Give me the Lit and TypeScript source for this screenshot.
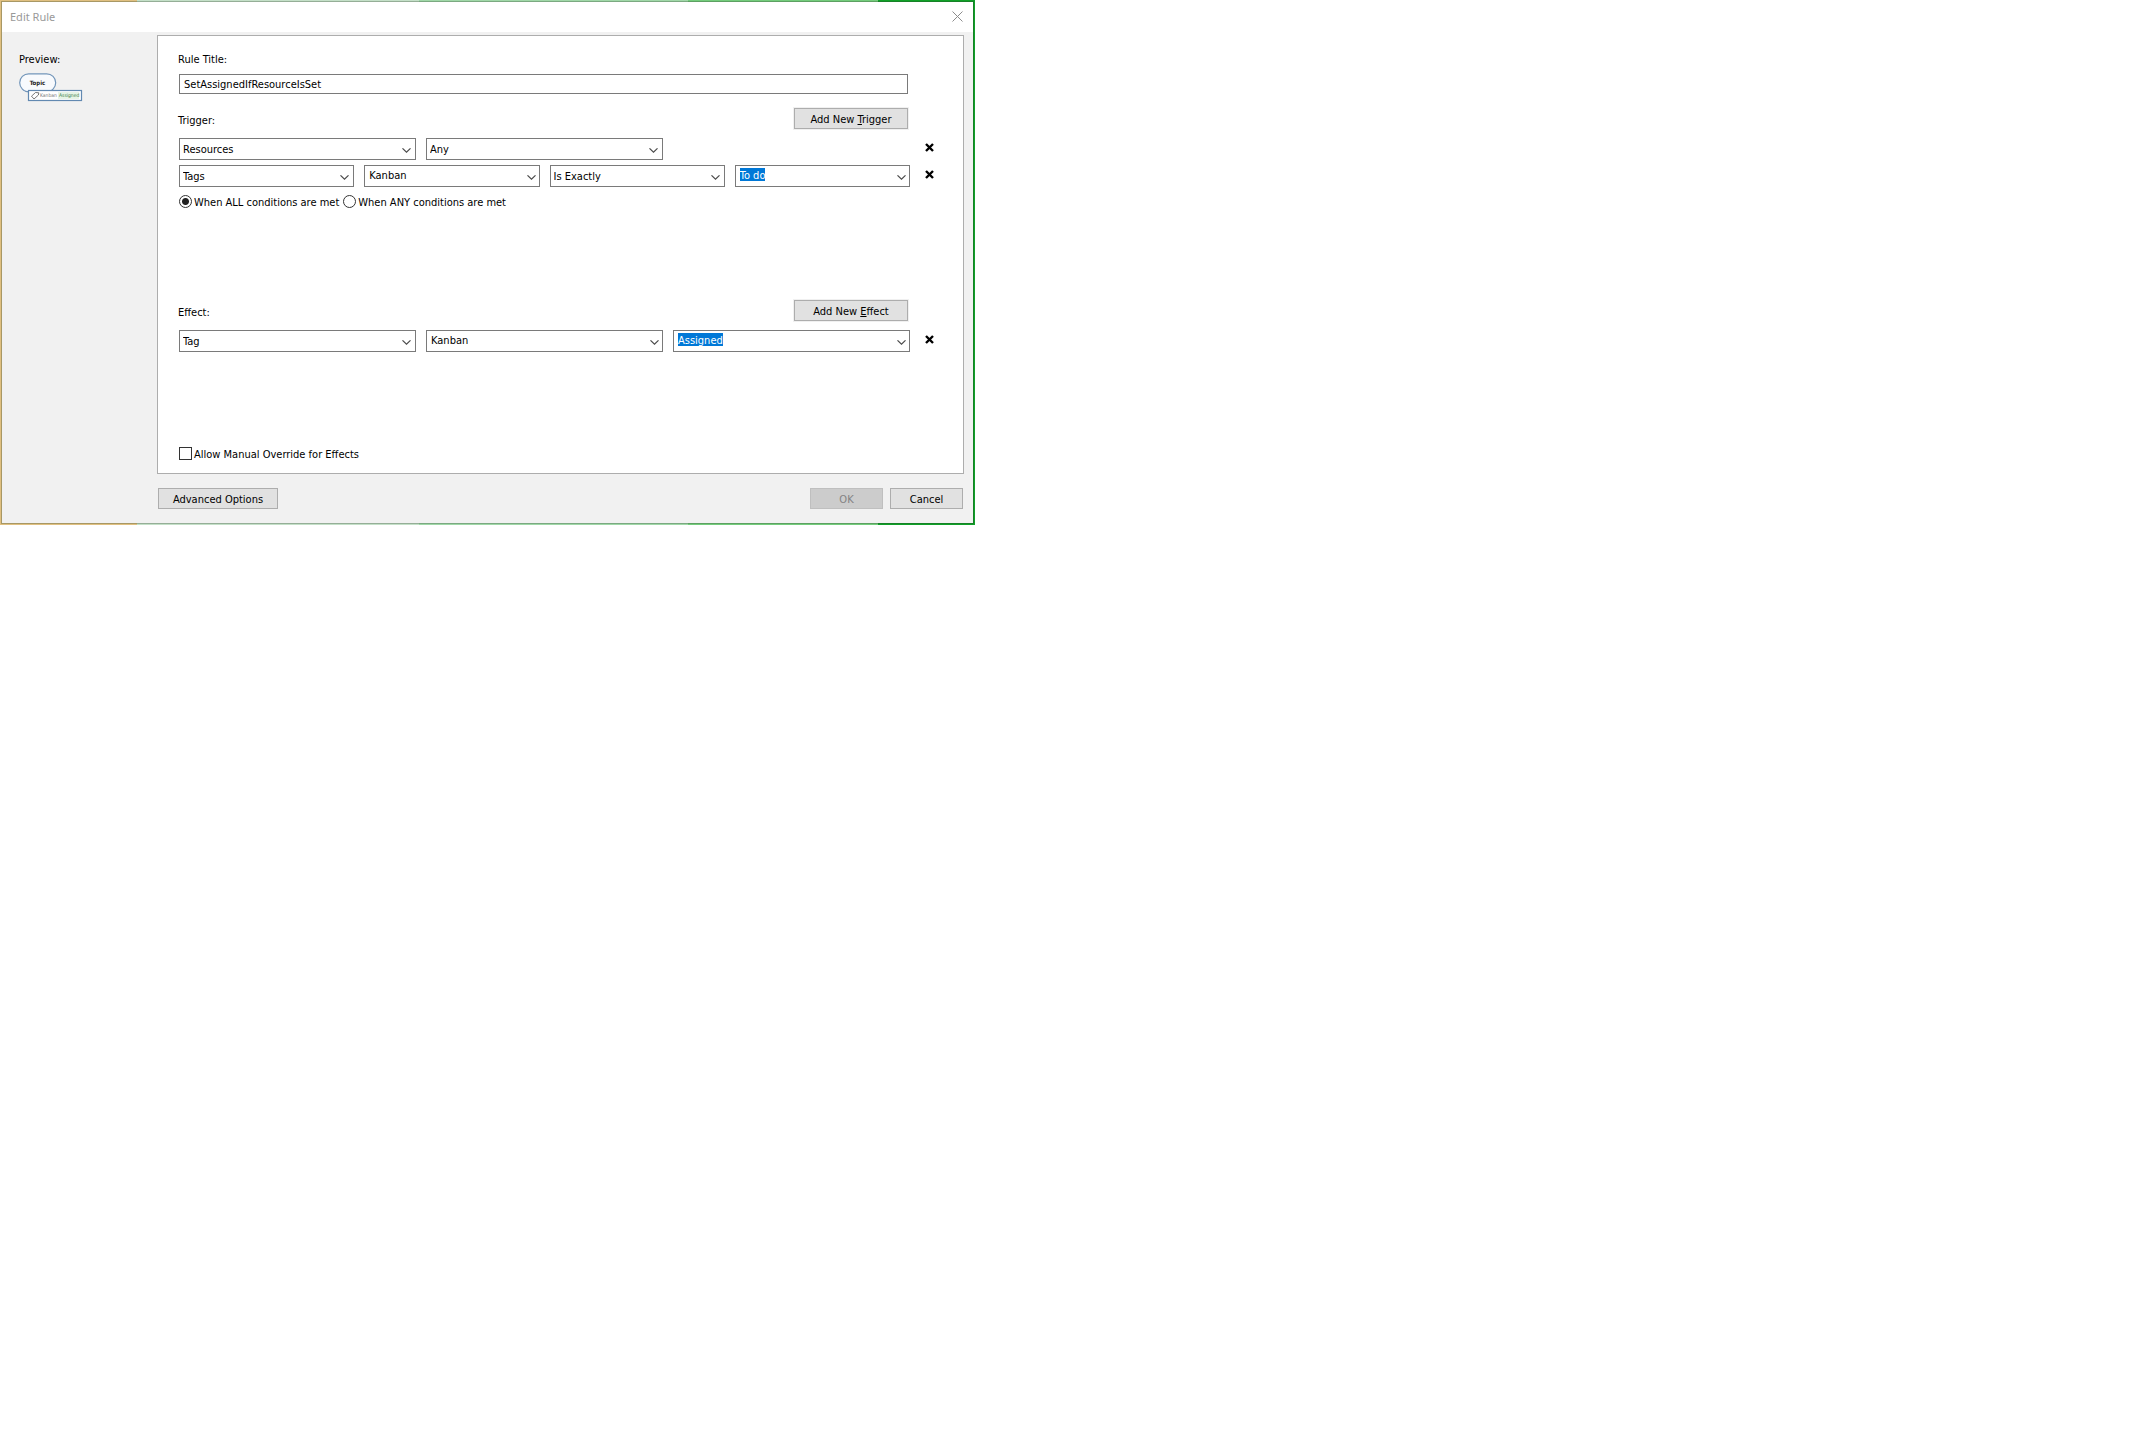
import { LitElement, html, svg, css } from "lit";
import { customElement, property, state } from "lit/decorators.js";
import { classMap } from "lit/directives/class-map.js";

const controlText = css`
  :host,
  button,
  input,
  select {
    font-family: "DejaVu Sans Condensed", "DejaVu Sans", sans-serif;
    font-size: 11px;
    line-height: 14px;
    color: #000;
  }
`;

const chevron = html`<svg class="chevron" width="9" height="5" viewBox="0 0 9 5" aria-hidden="true">
  ${svg`<path d="M0.5 0.3 L4.5 4.2 L8.5 0.3" fill="none" stroke="#4a4a4a" stroke-width="1.1" />`}
</svg>`;

/** Drop-down list; with `editable` it becomes a text box with a drop button. */
@customElement("rule-combo")
class RuleCombo extends LitElement {
  @property() value = "";
  @property() label = "";
  @property({ type: Boolean }) editable = false;
  @property({ type: Boolean }) highlighted = false;

  static styles = [
    controlText,
    css`
      :host {
        display: block;
        flex: 1 1 0;
        min-width: 0;
      }
      .box {
        box-sizing: border-box;
        display: grid;
        grid-template-columns: 1fr 17px;
        height: 22px;
        border: 1px solid #7a7a7a;
        background: #fff;
      }
      .list {
        grid-area: 1 / 1 / 2 / 3;
        appearance: none;
        width: 100%;
        margin: 0;
        padding: 1px 17px 0 3px;
        border: 0;
        border-radius: 0;
        background: transparent;
        outline: none;
      }
      .chevron {
        grid-area: 1 / 2 / 2 / 3;
        place-self: center;
        margin-top: 2px;
        pointer-events: none;
      }
      .edit {
        grid-area: 1 / 1 / 2 / 2;
        box-sizing: border-box;
        justify-self: start;
        field-sizing: content;
        max-width: 100%;
        height: 13px;
        margin: 2px 0 0 4px;
        padding: 1px 0 0;
        border: 0;
        background: transparent;
        line-height: 13px;
        outline: none;
      }
      .edit.on {
        background: #0078d7;
        color: #fff;
      }
      .drop {
        grid-area: 1 / 2 / 2 / 3;
        display: grid;
        padding: 0 1px 0 0;
        border: 0;
        background: transparent;
      }
    `,
  ];

  render() {
    return html`<div class="box">
      ${this.editable
        ? html`<input
              class=${classMap({ edit: true, on: this.highlighted })}
              type="text"
              aria-label=${this.label}
              .value=${this.value}
            />
            <button class="drop" type="button" aria-label="Open list">${chevron}</button>`
        : html`<select class="list" aria-label=${this.label}>
              <option selected>${this.value}</option>
            </select>
            ${chevron}`}
    </div>`;
  }
}

interface Field {
  label: string;
  value: string;
  editable?: boolean;
  highlighted?: boolean;
}

@customElement("app-root")
class AppRoot extends LitElement {
  @state() private triggers: Field[][] = [
    [
      { label: "Trigger type", value: "Resources" },
      { label: "Resource", value: "Any" },
    ],
    [
      { label: "Trigger type", value: "Tags" },
      { label: "Tag group", value: "Kanban", editable: true },
      { label: "Comparison", value: "Is Exactly" },
      { label: "Tag", value: "To do", editable: true, highlighted: true },
    ],
  ];

  @state() private effects: Field[][] = [
    [
      { label: "Effect type", value: "Tag" },
      { label: "Tag group", value: "Kanban", editable: true },
      { label: "Tag", value: "Assigned", editable: true, highlighted: true },
    ],
  ];

  static styles = [
    controlText,
    css`
      :host {
        display: block;
      }
      .dialog {
        box-sizing: border-box;
        max-width: 975px;
        padding: 1px;
        background: linear-gradient(
          90deg,
          #e0c080 14%,
          #c4e0c8 14% 43%,
          #a0d8a8 43% 70.6%,
          #74cc7c 70.6% 90%,
          #10a028 90%
        );
      }
      .window {
        border: 1px solid rgba(40, 60, 40, 0.3);
        background: #f1f1f1;
        background-clip: padding-box;
      }
      .titlebar {
        display: flex;
        align-items: center;
        justify-content: space-between;
        height: 30px;
        padding: 0 9px 0 8px;
        background: #fff;
      }
      .title {
        margin: 0;
        font: 400 11px/16px "Noto Sans", sans-serif;
        color: #999;
      }
      .close,
      .remove {
        display: grid;
        place-items: center;
        padding: 0;
        border: 0;
        background: transparent;
      }
      .close {
        width: 13px;
        height: 13px;
        margin-bottom: 2px;
      }
      .body {
        display: flex;
      }
      .side {
        flex: 0 0 138px;
        padding: 21px 0 0 17px;
      }
      .label {
        display: block;
        margin: 0 0 0 -1px;
        font-size: 11px;
        font-weight: 400;
        line-height: 14px;
      }
      .side .label {
        margin: 0;
      }
      .preview {
        display: block;
        margin-top: 6px;
      }
      .panel {
        flex: 1;
        min-width: 0;
        margin: 3px 9px 0 0;
        padding: 17px 55px 12px 21px;
        border: 1px solid #adadad;
        background: #fff;
      }
      .name {
        box-sizing: border-box;
        display: block;
        width: 100%;
        height: 20px;
        margin: 7px 0 14px;
        padding: 0 4px;
        border: 1px solid #7a7a7a;
        border-radius: 0;
        outline: none;
      }
      .section {
        display: flex;
        flex-direction: column;
        gap: 5px;
      }
      .triggers {
        min-height: 192px;
      }
      .effects {
        min-height: 147px;
      }
      .head {
        display: flex;
        align-items: flex-start;
        justify-content: space-between;
        margin-bottom: 4px;
      }
      .head .label {
        padding-top: 6px;
      }
      .btn {
        box-sizing: border-box;
        height: 21px;
        padding: 2px 0 0;
        border: 1px solid #adadad;
        border-radius: 0;
        background: #e1e1e1;
      }
      .add {
        width: 114px;
        box-shadow: 0 0 0 1px #f0f0f0;
      }
      .row {
        display: flex;
        gap: 10px;
        margin-right: -31px;
      }
      .fields {
        flex: 1;
        display: flex;
        gap: 10px;
        min-width: 0;
      }
      .blank {
        flex: 1 1 0;
      }
      .remove {
        width: 19px;
        height: 19px;
      }
      .choices {
        display: flex;
        gap: 4px;
        margin-top: 3px;
      }
      .choice {
        display: flex;
        gap: 2px;
        height: 14px;
        line-height: 16px;
      }
      .mark {
        box-sizing: border-box;
        appearance: none;
        width: 13px;
        height: 13px;
        margin: 0;
        border: 1px solid #333;
        background: #fff;
      }
      .round {
        border-radius: 50%;
      }
      .round:checked {
        background: radial-gradient(circle, #222 3px, #fff 4px);
      }
      .footer {
        display: flex;
        gap: 7px;
        padding: 14px 10px 14px 156px;
      }
      .advanced {
        width: 120px;
        margin-right: auto;
      }
      .small {
        width: 73px;
      }
      .btn:disabled {
        border-color: #bfbfbf;
        background: #ccc;
        color: #838383;
      }
    `,
  ];

  private preview() {
    return html`<svg class="preview" width="64" height="29" viewBox="0 0 64 29" role="img" aria-label="Topic with tag">
      ${svg`
        <rect x="0.7" y="0.8" width="36" height="18" rx="9" fill="#f8fafd" stroke="#7396ba" stroke-width="1.2" />
        <text x="18.5" y="12" text-anchor="middle" font-size="6" font-weight="700" fill="#222">Topic</text>
        <rect x="9.5" y="17.5" width="53" height="10" fill="#fff" stroke="#6289b1" stroke-width="1.2" />
        <path d="M12.5 23.2 L16.5 19.5 L19.8 19.8 L19.4 22 L15 26 Z" fill="#fff" stroke="#555" stroke-width="0.8" stroke-linejoin="round" />
        <rect x="39" y="19" width="21" height="7" fill="#e6f4e6" />
        <text x="21" y="24" font-size="5" fill="#777">Kanban</text>
        <text x="40" y="24" font-size="5" fill="#3c7c48">Assigned</text>`}
    </svg>`;
  }

  private row(fields: Field[]) {
    return html`<div class="row">
      <div class="fields">
        ${fields.map(
          (f) => html`<rule-combo
            .label=${f.label}
            .value=${f.value}
            .editable=${!!f.editable}
            .highlighted=${!!f.highlighted}
          ></rule-combo>`
        )}
        ${fields.length < 3 ? html`<div class="blank"></div>` : null}
      </div>
      <button class="remove" type="button" aria-label="Remove">
        <svg width="9" height="9" viewBox="0 0 9 9" aria-hidden="true">
          ${svg`<path d="M1 1 L8 8 M8 1 L1 8" stroke="#000" stroke-width="2.4" />`}
        </svg>
      </button>
    </div>`;
  }

  render() {
    return html`<div class="dialog">
      <div class="window" role="dialog" aria-labelledby="title">
        <header class="titlebar">
          <h1 class="title" id="title">Edit Rule</h1>
          <button class="close" type="button" aria-label="Close">
            <svg width="11" height="11" viewBox="0 0 11 11" aria-hidden="true">
              ${svg`<path d="M0.5 0.5 L10.5 10.5 M10.5 0.5 L0.5 10.5" stroke="#8c8c8c" stroke-width="1" />`}
            </svg>
          </button>
        </header>
        <div class="body">
          <aside class="side">
            <h2 class="label">Preview:</h2>
            ${this.preview()}
          </aside>
          <main class="panel">
            <label class="label" for="name">Rule Title:</label>
            <input class="name" id="name" type="text" value="SetAssignedIfResourceIsSet" />
            <section class="section triggers">
              <div class="head">
                <h2 class="label">Trigger:</h2>
                <button class="btn add" type="button">Add New <u>T</u>rigger</button>
              </div>
              ${this.triggers.map((t) => this.row(t))}
              <div class="choices">
                <label class="choice"><input class="mark round" type="radio" name="match" checked />When ALL conditions are met</label>
                <label class="choice"><input class="mark round" type="radio" name="match" />When ANY conditions are met</label>
              </div>
            </section>
            <section class="section effects">
              <div class="head">
                <h2 class="label">Effect:</h2>
                <button class="btn add" type="button">Add New <u>E</u>ffect</button>
              </div>
              ${this.effects.map((e) => this.row(e))}
            </section>
            <label class="choice"><input class="mark" type="checkbox" />Allow Manual Override for Effects</label>
          </main>
        </div>
        <footer class="footer">
          <button class="btn advanced" type="button">Advanced Options</button>
          <button class="btn small" type="button" disabled>OK</button>
          <button class="btn small" type="button">Cancel</button>
        </footer>
      </div>
    </div>`;
  }
}
